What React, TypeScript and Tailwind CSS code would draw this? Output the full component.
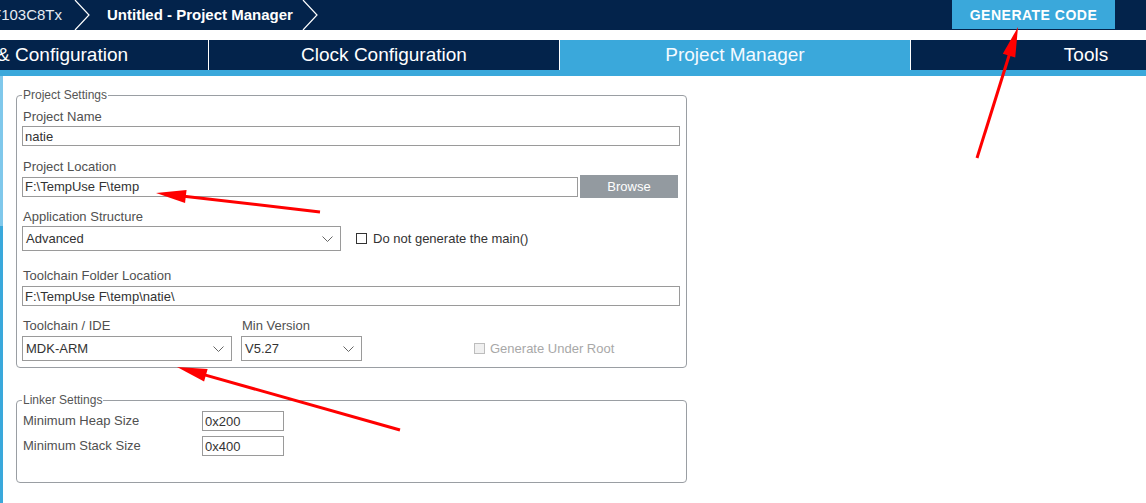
import React from "react";

type Pt = [number, number];

// red annotation arrows drawn over the screenshot
const Arrow = ({ from, to }: { from: Pt; to: Pt }) => {
  const dx = to[0] - from[0];
  const dy = to[1] - from[1];
  const len = Math.hypot(dx, dy);
  const ux = dx / len;
  const uy = dy / len;
  const L = 30;
  const w = 6.5;
  const bx = to[0] - ux * L;
  const by = to[1] - uy * L;
  const pts = [
    to,
    [bx - uy * w, by + ux * w],
    [bx + uy * w, by - ux * w],
  ]
    .map((p) => p.join(","))
    .join(" ");
  return (
    <g>
      <line
        x1={from[0]}
        y1={from[1]}
        x2={bx + ux * 4}
        y2={by + uy * 4}
        stroke="#ff0000"
        strokeWidth={3}
      />
      <polygon points={pts} fill="#ff0000" />
    </g>
  );
};

const Chevron = () => (
  <svg width="16" height="30" viewBox="0 0 16 30" className="shrink-0">
    <polyline points="1,0 15,15 1,30" fill="none" stroke="#ffffff" strokeWidth="1.2" />
  </svg>
);

const SelectChevron = () => (
  <svg width="11" height="6" viewBox="0 0 11 6">
    <polyline points="0.5,0.5 5.5,5.5 10.5,0.5" fill="none" stroke="#666" strokeWidth="1" />
  </svg>
);

const Field = ({ value, className = "" }: { value: string; className?: string }) => (
  <input
    readOnly
    value={value}
    className={`block h-[20px] border border-[#9a9a9a] bg-white px-[2px] text-[13px] leading-[18px] text-[#333] outline-none ${className}`}
  />
);

const Select = ({ value, className = "" }: { value: string; className?: string }) => (
  <div
    className={`flex h-[25px] items-center justify-between border border-[#9a9a9a] bg-white pl-[3px] pr-[7px] text-[13px] leading-[14px] text-[#333] ${className}`}
  >
    <span>{value}</span>
    <SelectChevron />
  </div>
);

const Label = ({ children }: { children: React.ReactNode }) => (
  <div className="pl-[1px] text-[13px] leading-[14px] text-[#505050]">{children}</div>
);

const tabs = [
  { label: "Pinout & Configuration", active: false },
  { label: "Clock Configuration", active: false },
  { label: "Project Manager", active: true },
  { label: "Tools", active: false },
];

export default function App() {
  return (
    <div className="relative h-[503px] w-[1146px] overflow-hidden bg-white font-['Liberation_Sans',Arial,sans-serif] leading-[14px]">
      {/* breadcrumb bar */}
      <div className="flex h-[30px] items-center bg-[#03234b] text-[15px] text-white">
        <span className="-ml-[8px] text-[#e6ebf2]">F103C8Tx</span>
        <div className="ml-[12px]">
          <Chevron />
        </div>
        <span className="ml-[17px] font-bold">Untitled - Project Manager</span>
        <div className="ml-[9px]">
          <Chevron />
        </div>
        <div className="flex-1" />
        <button className="mr-[31px] h-[29px] w-[163px] self-start bg-[#3aa8db] text-[14px] font-bold tracking-[0.5px] text-white">
          GENERATE CODE
        </button>
      </div>

      {/* tabs */}
      <div className="mt-[10px] flex h-[30px] overflow-hidden bg-[#03234b]">
        {tabs.map((t, i) => (
          <div
            key={t.label}
            className={`flex h-full shrink-0 items-center justify-center text-[19px] ${
              i === 0 ? "-ml-[142px] w-[350px]" : "w-[351px] border-l border-white"
            } ${t.active ? "bg-[#3aa8db] text-[#f4faff]" : "text-white"}`}
          >
            {t.label}
          </div>
        ))}
      </div>
      <div className="h-[6px] bg-[#3aa8db]" />

      <div className="flex h-[427px]">
        <div className="flex w-[3px] flex-col">
          <div className="h-[150px] bg-[#80c8eb]" />
          <div className="flex-1 bg-[#3aa8db]" />
        </div>

        <div className="pl-[13px] pt-[12px]">
          {/* Project Settings */}
          <fieldset className="w-[671px] rounded-[4px] border border-[#9a9ea3] pb-[6px] pl-[5px] pr-[6px] pt-[8px]">
            <legend className="px-[1px] text-[12px] leading-[14px] text-[#555]">Project Settings</legend>

            <Label>Project Name</Label>
            <Field value="natie" className="mt-[2px] w-full" />

            <div className="mt-[14px]">
              <Label>Project Location</Label>
            </div>
            <div className="mt-[1px] flex h-[23px] items-center">
              <Field value="F:\TempUse F\temp" className="w-[556px]" />
              <button className="ml-[2px] h-[23px] w-[98px] bg-[#939aa0] text-[13px] text-white">Browse</button>
            </div>

            <div className="mt-[12px]">
              <Label>Application Structure</Label>
            </div>
            <div className="mt-[2px] flex items-center">
              <Select value="Advanced" className="w-[319px]" />
              <span className="ml-[15px] h-[11px] w-[11px] border border-[#333] bg-white" />
              <span className="ml-[6px] text-[13px] text-[#333]">Do not generate the main()</span>
            </div>

            <div className="mt-[18px]">
              <Label>Toolchain Folder Location</Label>
            </div>
            <Field value="F:\TempUse F\temp\natie\" className="mt-[3px] w-full" />

            <div className="mt-[13px] flex">
              <div className="w-[219px]">
                <Label>Toolchain / IDE</Label>
              </div>
              <Label>Min Version</Label>
            </div>
            <div className="mt-[3px] flex items-center">
              <Select value="MDK-ARM" className="w-[210px]" />
              <Select value="V5.27" className="ml-[9px] w-[121px]" />
              <span className="ml-[112px] h-[11px] w-[11px] border border-[#bdbdbd] bg-[#f0f0f0]" />
              <span className="ml-[5px] text-[13px] text-[#a8a8a8]">Generate Under Root</span>
            </div>
          </fieldset>

          {/* Linker Settings */}
          <fieldset className="mt-[25px] w-[671px] rounded-[4px] border border-[#9a9ea3] pb-[26px] pl-[5px] pr-[6px] pt-[4px]">
            <legend className="px-[1px] text-[12px] leading-[14px] text-[#555]">Linker Settings</legend>
            <div className="flex h-[20px] items-center">
              <div className="w-[180px]">
                <Label>Minimum Heap Size</Label>
              </div>
              <Field value="0x200" className="w-[82px]" />
            </div>
            <div className="mt-[5px] flex h-[20px] items-center">
              <div className="w-[180px]">
                <Label>Minimum Stack Size</Label>
              </div>
              <Field value="0x400" className="w-[82px]" />
            </div>
          </fieldset>
        </div>
      </div>

      {/* annotations */}
      <svg className="pointer-events-none absolute left-0 top-0" width="1146" height="503">
        <Arrow from={[977, 158]} to={[1018, 27]} />
        <Arrow from={[320, 212]} to={[156, 193]} />
        <Arrow from={[400, 430]} to={[177, 367]} />
      </svg>
    </div>
  );
}
